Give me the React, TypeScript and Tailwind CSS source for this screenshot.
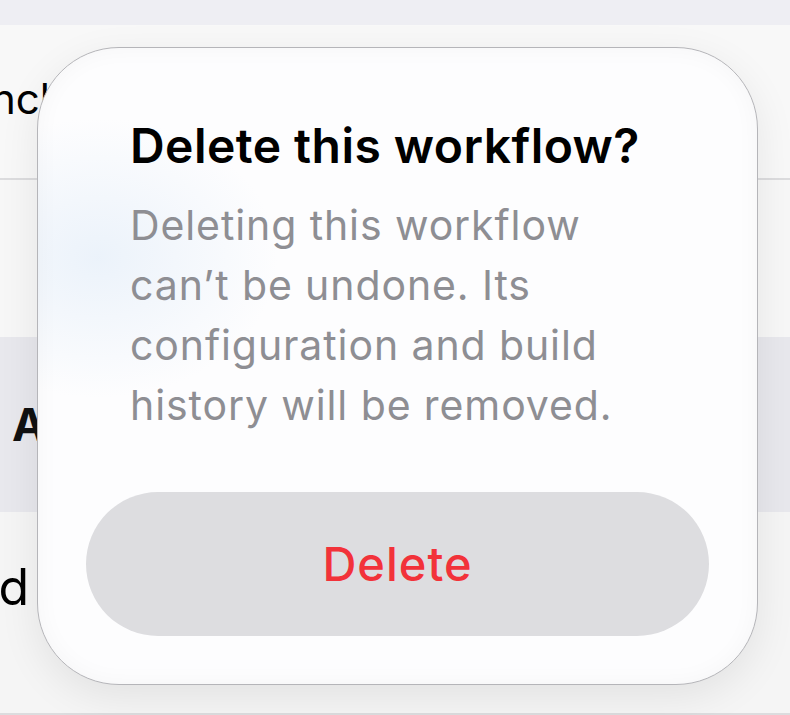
import React from "react";

export default function App() {
  return (
    <div
      className="relative w-[790px] h-[715px] overflow-hidden bg-[#f7f7f7]"
      style={{ fontFamily: "Inter, 'Noto Sans', sans-serif" }}
    >
      {/* background list */}
      <div className="flex flex-col">
        <div className="h-[25px] bg-[#eeeef3]" />
        <div className="h-[153px] bg-[#f8f8f8] flex items-end pb-[58px] overflow-hidden">
          <span className="text-[42px] leading-none text-black whitespace-nowrap -ml-[76px]">Branch</span>
        </div>
        <div className="h-[2px] bg-[#dcdcde]" />
        <div className="h-[157px] bg-[#f7f7f7]" />
        <div className="h-[175px] bg-[#e8e8ed] flex items-center pl-[12px] overflow-hidden">
          <span className="text-[45px] leading-none font-bold text-[#111] whitespace-nowrap">Actions</span>
        </div>
        <div className="h-[201px] bg-[#f5f5f5] flex items-start pt-[50px] overflow-hidden">
          <span className="text-[50px] leading-none text-black whitespace-nowrap -ml-[88px]">Build</span>
        </div>
        <div className="h-[2px] bg-[#dcdcde]" />
      </div>

      {/* dialog */}
      <div
        className="absolute left-[37px] top-[47px] w-[721px] h-[638px] rounded-[82px] border border-[#b5b5b9] bg-[#fdfdfe] shadow-[0_12px_40px_rgba(0,0,0,0.08),inset_0_0_24px_rgba(0,0,0,0.035)] flex flex-col px-[48px] pb-[48px] pt-[69px]"
        style={{
          backgroundImage:
            "radial-gradient(ellipse 180px 140px at 60px 210px, rgba(228,238,249,0.7), rgba(253,253,254,0) 100%)",
        }}
      >
        <div className="px-[44px]">
          <h1 className="text-[48px] leading-[58px] font-semibold text-black tracking-[0.45px] whitespace-nowrap">
            Delete this workflow?
          </h1>
          <p className="mt-[20px] text-[41px] leading-[60px] text-[#8e8e93] tracking-[0.9px] whitespace-nowrap">
            Deleting this workflow
            <br />
            can’t be undone. Its
            <br />
            configuration and build
            <br />
            history will be removed.
          </p>
        </div>
        <div className="flex-1" />
        <button className="h-[144px] w-full rounded-full bg-[#dddde0] flex items-center justify-center">
          <span className="text-[47px] font-medium tracking-[1px] text-[#f2323a]">Delete</span>
        </button>
      </div>
    </div>
  );
}
